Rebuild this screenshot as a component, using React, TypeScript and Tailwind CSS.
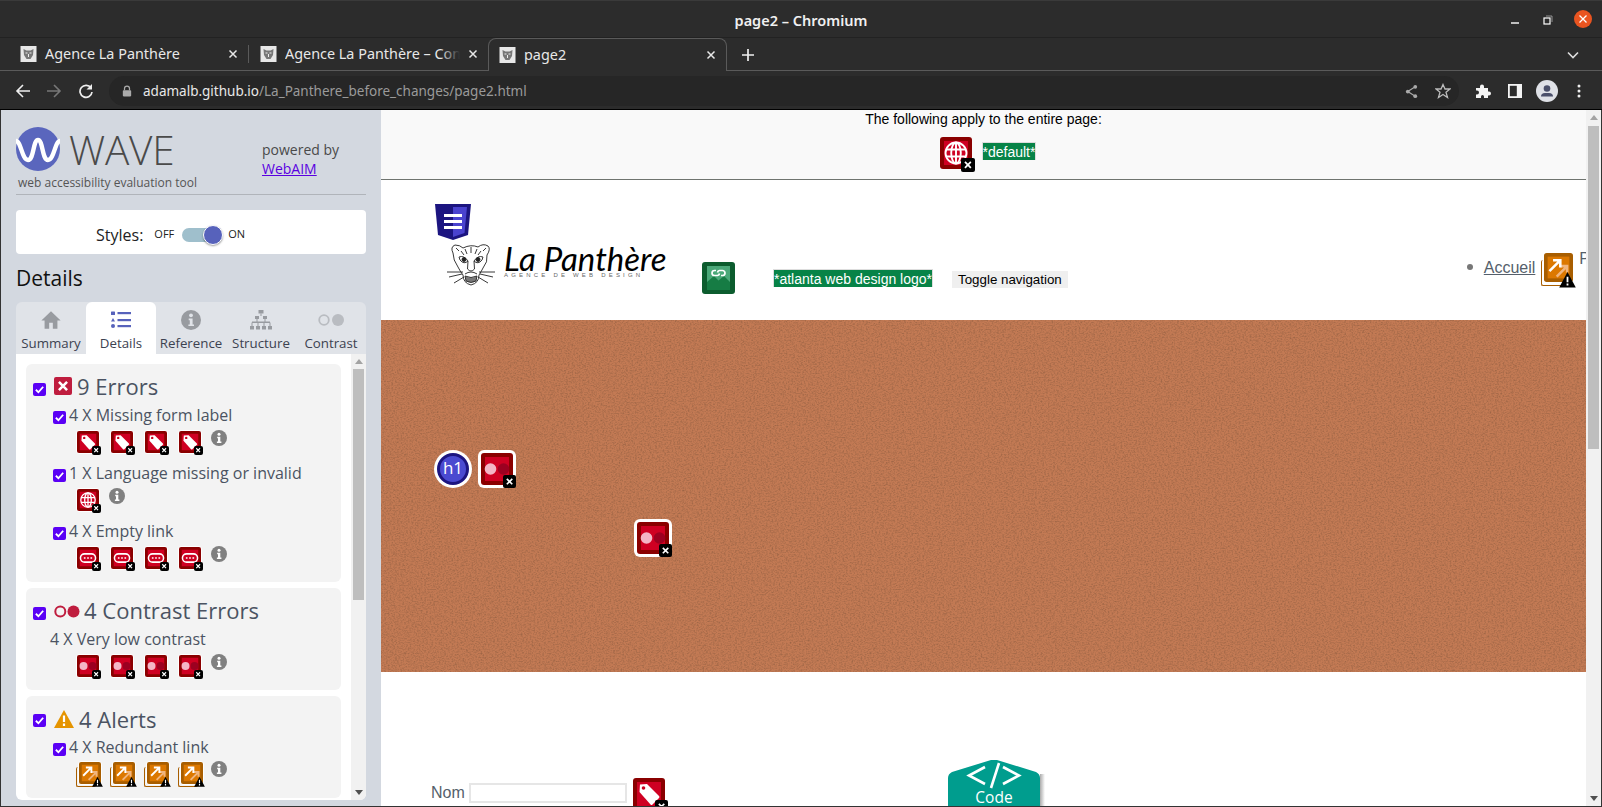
import React from "react";

type Kind = "tag" | "globe" | "link" | "contrast" | "redirect";

function Glyph({ kind }: { kind: Kind }) {
  if (kind === "tag")
    return (
      <g>
        <path d="M7 6.5 L14 6 L26 18 Q27 19 26 20 L19.5 26.5 Q18.5 27.5 17.5 26.5 L6.5 14 Z" fill="#fff" />
        <circle cx="10.5" cy="10" r="1.8" fill="#c8001e" />
      </g>
    );
  if (kind === "globe")
    return (
      <g fill="none" stroke="#fff" strokeWidth="1.9">
        <circle cx="16" cy="16" r="10.5" />
        <ellipse cx="16" cy="16" rx="4.8" ry="10.5" />
        <path d="M16 5.5V26.5M6 12.5H26M6 19.5H26" />
      </g>
    );
  if (kind === "link")
    return (
      <g fill="none" stroke="#fff" strokeWidth="2.2">
        <rect x="5" y="10" width="22" height="12" rx="6" />
        <path d="M10 16h2.4M14.8 16h2.4M19.6 16h2.4" strokeWidth="2.4" />
      </g>
    );
  if (kind === "contrast")
    return (
      <g>
        <circle cx="9.5" cy="16" r="5.8" fill="#f4b6c6" />
        <circle cx="22.5" cy="16" r="5.8" fill="#9c0020" />
      </g>
    );
  return (
    <g fill="none" strokeWidth="2.8">
      <path d="M14 26 L25 15 M18.5 14.5H25.5V21.5" stroke="#f0b57e" />
      <path d="M6 20 L17 9 M10 8H18V16" stroke="#fff" />
    </g>
  );
}

function XBadge({ s, off }: { s: number; off: number }) {
  return (
    <span className="absolute rounded-[2px] bg-black flex items-center justify-center" style={{ width: s, height: s, right: off, bottom: off }}>
      <svg viewBox="0 0 10 10" width={s * 0.7} height={s * 0.7}>
        <path d="M2 2L8 8M8 2L2 8" stroke="#fff" strokeWidth="1.8" />
      </svg>
    </span>
  );
}

function WarnBadge({ s, off, offB }: { s: number; off: number; offB: number }) {
  return (
    <span className="absolute" style={{ width: s, height: s, right: off, bottom: offB }}>
      <svg viewBox="0 0 16 15" width={s} height={s} className="block">
        <path d="M8 0.5 L15.8 15 H0.2 Z" fill="#000" />
        <path d="M8 5V10M8 11.2V13.2" stroke="#fff" strokeWidth="1.7" />
      </svg>
    </span>
  );
}

function Tile({ kind, size = 22, ring = 1, badge, off = -1, offB }: { kind: Kind; size?: number; ring?: number; badge?: number; off?: number; offB?: number }) {
  const orange = kind === "redirect";
  const edge = orange ? "#a85e00" : "#8a0000";
  const fill = orange ? "#dc7800" : "#cf0022";
  return (
    <span className="relative block shrink-0" style={{ width: size + ring * 2, height: size + ring * 2 }}>
      {orange && <span className="absolute rounded-[2px] border-l-[1.5px] border-b-[1.5px] border-[#a85e00]" style={{ left: -size * 0.13 + ring, bottom: -size * 0.13 + ring, width: size * 0.9, height: size * 0.9 }} />}
      {ring > 0 && <span className={"absolute inset-0 bg-white " + (ring > 1 ? "rounded-[6px]" : "rounded-[4px]")} />}
      <svg viewBox="0 0 32 32" width={size} height={size} className="absolute" style={{ left: ring, top: ring }}>
        <rect width="32" height="32" rx="3" fill={edge} />
        <rect x="4" y="4" width="24" height="24" fill={fill} />
        <Glyph kind={kind} />
      </svg>
      {orange ? <WarnBadge s={badge ?? 11} off={off} offB={offB ?? -2} /> : <XBadge s={badge ?? 9} off={off} />}
    </span>
  );
}

function Info({ className = "" }: { className?: string }) {
  return (
    <svg viewBox="0 0 16 16" width="16" height="16" className={className}>
      <circle cx="8" cy="8" r="8" fill="#808080" />
      <circle cx="8" cy="4.2" r="1.5" fill="#fff" />
      <path d="M6.2 6.8H9.3V11.6H10.4V13H5.9V11.6H7V8.2H6.2Z" fill="#fff" />
    </svg>
  );
}

function Check({ className = "" }: { className?: string }) {
  return (
    <span className={"w-[13px] h-[13px] rounded-[2px] bg-[#5a00f5] flex items-center justify-center shrink-0 " + className}>
      <svg viewBox="0 0 12 12" width="11" height="11">
        <path d="M2 6.3L4.8 9L10 3" fill="none" stroke="#fff" strokeWidth="2" />
      </svg>
    </span>
  );
}

function IconRow({ kind, n, className = "" }: { kind: Kind; n: number; className?: string }) {
  const inset = kind === "redirect" ? "ml-[52px]" : "ml-[50px]";
  return (
    <div className={"flex items-start h-[24px] " + inset + " " + className}>
      {Array.from({ length: n }).map((_, i) => (
        <span key={i} className="mr-[10px]">
          <Tile kind={kind} />
        </span>
      ))}
      <Info className={kind === "redirect" ? "-ml-[3px]" : "-ml-px"} />
    </div>
  );
}

function Sub({ text, className = "" }: { text: string; className?: string }) {
  return (
    <div className={"flex items-center pl-[27px] h-[20px] text-[16px] text-[#4b5362] " + className}>
      <Check className="mt-[4px]" />
      <span className="ml-[3px] leading-[20px]">{text}</span>
    </div>
  );
}

function Tab({ label, active, children }: { label: string; active?: boolean; children: React.ReactNode }) {
  return (
    <div className={"w-[70px] flex flex-col items-center rounded-t-[6px] " + (active ? "bg-white" : "")}>
      <div className="h-[33px] flex items-center justify-center pt-[2px]">{children}</div>
      <div className="text-[13.3px] leading-[16px] text-[#3c4250]">{label}</div>
    </div>
  );
}

function Sidebar() {
  return (
    <aside className="w-[381px] shrink-0 bg-[#d3d8e0] pl-[16px] pr-[15px] h-full overflow-hidden font-['Open_Sans',sans-serif] border-l border-[#333]">
      <div className="flex h-[85px] border-b border-[#b0b4ba] -ml-px">
        <div className="w-[246px] relative">
          <div className="flex items-center pt-[16px]">
            <svg viewBox="0 0 44 44" width="44" height="44" className="shrink-0">
              <circle cx="22" cy="22" r="22" fill="#5a66bd" />
              <path d="M0 14 C5 14 6 33 12 33 C18 33 17 13 22 13 C27 13 26 33 32 33 C38 33 39 14 44 14" fill="none" stroke="#fff" strokeWidth="4.4" />
            </svg>
            <span className="ml-[9px] mt-[2px] text-[40.5px] leading-[44px] font-light text-[#4a4a4a] tracking-[-0.2px]">WAVE</span>
          </div>
          <div className="ml-[2px] mt-[3px] text-[12px] leading-[16px] text-[#555]">web accessibility evaluation tool</div>
        </div>
        <div className="pt-[30px] text-[14px] leading-[19px] text-[#4a4a4a]">
          powered by
          <br />
          <a className="underline text-[#5a00e0]">WebAIM</a>
        </div>
      </div>
      <div className="mt-[15px] -ml-px h-[44px] w-[350px] bg-white rounded-[4px] flex items-center pl-[80px] pt-[5px]">
        <span className="text-[16px] text-[#222]">Styles:</span>
        <span className="ml-[11px] text-[11px] text-[#222]">OFF</span>
        <span className="relative ml-[8px] w-[32px] h-[14px] rounded-full bg-[#9fbfcc]">
          <span className="absolute -right-[9px] -top-[3px] w-[20px] h-[20px] rounded-full bg-[#5762bb] border border-white shadow-[0_1px_2px_rgba(0,0,0,0.4)]" />
        </span>
        <span className="ml-[14px] text-[11px] text-[#222]">ON</span>
      </div>
      <h2 className="-ml-px mt-[10px] h-[38px] text-[21px] leading-[28px] text-[#111] font-normal">Details</h2>
      <div className="-ml-px w-[350px] h-[52px] bg-[#e0e3e8] rounded-t-[6px] flex">
        <Tab label="Summary">
          <svg viewBox="0 0 24 24" width="22" height="22">
            <path d="M12 2.5L1.5 12.5H5V21.5H10V15H14V21.5H19V12.5H22.5Z" fill="#989ba0" />
          </svg>
        </Tab>
        <Tab label="Details" active>
          <svg viewBox="0 0 20 18" width="20" height="18">
            <g fill="#5762bb">
              <rect x="0" y="0.5" width="4" height="3.6" rx="0.6" />
              <path d="M2 7 L4 10.5 H0 Z" />
              <circle cx="2" cy="15" r="2" />
              <rect x="6.5" y="1" width="13.5" height="2.2" />
              <rect x="6.5" y="8" width="13.5" height="2.2" />
              <rect x="6.5" y="14" width="13.5" height="2.2" />
            </g>
          </svg>
        </Tab>
        <Tab label="Reference">
          <svg viewBox="0 0 20 20" width="20" height="20">
            <circle cx="10" cy="10" r="10" fill="#989ba0" />
            <circle cx="10" cy="5.3" r="1.9" fill="#e0e3e8" />
            <path d="M7.7 8.6H11.6V14.4H13V16H7.4V14.4H8.8V10.2H7.7Z" fill="#e0e3e8" />
          </svg>
        </Tab>
        <Tab label="Structure">
          <svg viewBox="0 0 22 20" width="22" height="20" fill="#989ba0">
            <rect x="8.5" y="0" width="5" height="3.5" />
            <rect x="5" y="6" width="4" height="3" />
            <rect x="13" y="6" width="4" height="3" />
            <rect x="0" y="16" width="4" height="3.5" />
            <rect x="6" y="16" width="4" height="3.5" />
            <rect x="12" y="16" width="4" height="3.5" />
            <rect x="18" y="16" width="4" height="3.5" />
            <path d="M11 3.5V6M7 9V12M15 9V12M2 16V12.5H20V16M8 16V12.5M14 16V12.5M2 12H20" fill="none" stroke="#989ba0" strokeWidth="1" />
          </svg>
        </Tab>
        <Tab label="Contrast">
          <svg viewBox="0 0 26 12" width="26" height="12">
            <circle cx="6" cy="6" r="4.8" fill="none" stroke="#b9bcc1" strokeWidth="1.8" />
            <circle cx="20" cy="6" r="6" fill="#b9bcc1" />
          </svg>
        </Tab>
      </div>
      <div className="-ml-px relative w-[350px] h-[446px] bg-white rounded-b-[6px] pl-[10px] pt-[10px] overflow-hidden">
        <div className="w-[315px] h-[218px] bg-[#f3f3f3] rounded-[6px] pt-[11px]">
          <div className="flex items-start pl-[7px] h-[28px]">
            <Check className="mt-[8px]" />
            <span className="ml-[8px] mt-[2px] w-[18px] h-[18px] rounded-[2px] bg-[#bf1d3e] flex items-center justify-center">
              <svg viewBox="0 0 12 12" width="14" height="14">
                <path d="M2.5 2.5L9.5 9.5M9.5 2.5L2.5 9.5" stroke="#fff" strokeWidth="2.2" />
              </svg>
            </span>
            <span className="ml-[5px] -mt-[3px] text-[22px] leading-[28px] text-[#4b5362]">9 Errors</span>
          </div>
          <Sub text="4 X Missing form label" className="mt-[2px]" />
          <IconRow kind="tag" n={4} className="mt-[5px]" />
          <Sub text="1 X Language missing or invalid" className="mt-[9px]" />
          <IconRow kind="globe" n={1} className="mt-[5px]" />
          <Sub text="4 X Empty link" className="mt-[9px]" />
          <IconRow kind="link" n={4} className="mt-[5px]" />
        </div>
        <div className="w-[315px] h-[102px] bg-[#f3f3f3] rounded-[6px] mt-[6px] pt-[10px]">
          <div className="flex items-start pl-[7px] h-[28px]">
            <Check className="mt-[9px]" />
            <svg viewBox="0 0 26 13" width="26" height="13" className="ml-[8px] mt-[7px]">
              <circle cx="6.3" cy="6.5" r="5" fill="none" stroke="#bf1d3e" strokeWidth="2" />
              <circle cx="19.5" cy="6.5" r="6" fill="#bf1d3e" />
            </svg>
            <span className="ml-[4px] -mt-px text-[22px] leading-[26px] text-[#4b5362]">4 Contrast Errors</span>
          </div>
          <div className="pl-[24px] h-[20px] mt-[3px] text-[16px] leading-[20px] text-[#4b5362]">4 X Very low contrast</div>
          <IconRow kind="contrast" n={4} className="mt-[5px]" />
        </div>
        <div className="w-[315px] h-[102px] bg-[#f3f3f3] rounded-[6px] mt-[6px] pt-[10px]">
          <div className="flex items-start pl-[7px] h-[28px]">
            <Check className="mt-[8px]" />
            <svg viewBox="0 0 20 18" width="20" height="18" className="ml-[8px] mt-[4px]">
              <path d="M10 0 L20 18 H0 Z" fill="#e59400" />
              <path d="M10 5.5V12M10 13.5V16" stroke="#fff" strokeWidth="2.2" />
            </svg>
            <span className="ml-[5px] text-[22px] leading-[26px] text-[#4b5362]">4 Alerts</span>
          </div>
          <Sub text="4 X Redundant link" className="mt-[3px]" />
          <IconRow kind="redirect" n={4} className="mt-[4px]" />
        </div>
        <div className="absolute right-0 top-0 bottom-0 w-[15px] bg-[#f1f1f1] flex flex-col items-center">
          <svg viewBox="0 0 10 6" width="8" height="5" className="mt-[5px]"><path d="M5 0L10 6H0Z" fill="#a3a3a3" /></svg>
          <div className="w-[11px] h-[231px] bg-[#bebebe] mt-[5px]" />
          <svg viewBox="0 0 10 6" width="8" height="5" className="mt-auto mb-[5px]"><path d="M5 6L10 0H0Z" fill="#505050" /></svg>
        </div>
      </div>
    </aside>
  );
}

function Panther() {
  return (
    <svg viewBox="0 0 50 42" width="50" height="42" className="shrink-0" fill="none" stroke="#222" strokeWidth="0.9">
      <path d="M7 9 Q4 3 9 1 Q14 1 17 4 Q25 0 32 3 Q37 -1 42 2 Q45 5 41 11 Q42 18 37 24 Q35 28 33 31 Q33 39 25 41 Q17 39 17 31 Q14 27 12 23 Q7 16 7 9Z" />
      <path d="M10 4l3 3M40 4l-3 3M19 5l2 5M31 5l-2 5M25 3v6M15 7l3 4M35 7l-3 4" />
      <path d="M13 13 Q18 11 22 17 Q18 21 14 16ZM37 13 Q32 11 28 17 Q32 21 36 16Z" />
      <circle cx="18" cy="15.5" r="2" fill="#222" /><circle cx="32" cy="15.5" r="2" fill="#222" />
      <path d="M22 17 L21.5 25 Q25 29 28.5 25 L28 17M19 30 Q25 26 31 30" />
      <path d="M19 32 Q25 35 31 32 L30 37 Q25 40 20 37Z" fill="#777" />
      <path d="M17 28 L1 28 M16 30 L3 33 M18 33 L8 39 M33 28 L49 28 M34 30 L47 33 M32 33 L42 39" />
    </svg>
  );
}

function Main() {
  return (
    <main className="flex-1 min-w-0 h-full overflow-hidden relative font-['Liberation_Sans',sans-serif] bg-white">
      <div className="h-[70px] bg-[#f9f9f9] border-b border-[#6f746f] flex flex-col items-center">
        <div className="text-[14px] leading-[18px] text-black">The following apply to the entire page:</div>
        <div className="flex items-center mt-[9px] ml-[9px]">
          <Tile kind="globe" size={32} ring={0} badge={14} off={-3} />
          <span className="ml-[10px] -mt-[4px] h-[18px] leading-[18px] text-[14px] text-white bg-[#078347] border-x border-t border-[#ddd]">*default*</span>
        </div>
      </div>
      <div className="h-[140px] pt-[24px] pl-[54px] whitespace-nowrap">
        <svg viewBox="0 0 36 36" width="36" height="36" className="block">
          <path d="M0 0H36L33 31L18 36L3 31Z" fill="#1c1580" />
          <path d="M18 3H32L29.5 29L18 33Z" fill="#4a43cf" />
          <rect x="9" y="10" width="18" height="3" fill="#fff" />
          <rect x="9" y="16" width="18" height="3" fill="#fff" />
          <rect x="9" y="22" width="18" height="3" fill="#fff" />
        </svg>
        <div className="flex items-start ml-[11px] mt-[4px]">
          <Panther />
          <div className="ml-[8px] w-[162px] shrink-0 h-[40px]">
            <span className="block font-['Lato',sans-serif] italic text-[33px] leading-[28px] text-black">La Panthère</span>
            <span className="block text-[6px] leading-[6px] tracking-[3.2px] text-[#666]">AGENCE DE WEB DESIGN</span>
          </div>
          <span className="ml-[36px] mt-[18px] shrink-0">
            <svg viewBox="0 0 33 32" width="33" height="32" className="block">
              <rect width="33" height="32" rx="3" fill="#0c5c2e" />
              <rect x="5" y="4" width="23" height="24" fill="#4aa878" />
              <path d="M5 28V20L12 14L16.5 18.5L22 14L28 20V28Z" fill="#167c44" />
              <path d="M14 8.5H12.5a2.4 2.4 0 0 0 0 5H15.5a2.4 2.4 0 0 0 2-2M19 13.5H20.5a2.4 2.4 0 0 0 0-5H17.5a2.4 2.4 0 0 0-2 2" fill="none" stroke="#fff" strokeWidth="1.7" />
            </svg>
          </span>
          <span className="ml-[38px] mt-[25px] h-[18px] shrink-0 leading-[18px] text-[14px] text-white bg-[#078347] border-x border-t border-[#ddd]">*atlanta web design logo*</span>
          <span className="ml-[19px] mt-[27px] h-[17px] shrink-0 leading-[17px] text-[13.33px] text-black bg-[#efefef] px-[6px]">Toggle navigation</span>
          <span className="ml-[399px] mt-[20px] w-[6px] h-[6px] shrink-0 rounded-full bg-[#777]" />
          <a className="ml-[11px] mt-[15px] shrink-0 text-[16px] leading-[18px] underline text-[#555f6b]">Accueil</a>
          <span className="ml-[9px] mt-[9px] shrink-0"><Tile kind="redirect" size={29} ring={0} badge={17} off={-3} offB={-6} /></span>
          <span className="ml-[6px] mt-[6px] shrink-0 text-[16px] leading-[18px] text-[#555f6b]">P</span>
        </div>
      </div>
      <div className="relative h-[352px] bg-[#c37a54] overflow-hidden">
        <svg className="absolute inset-0 w-full h-full" xmlns="http://www.w3.org/2000/svg">
          <filter id="paper" x="0" y="0" width="100%" height="100%">
            <feTurbulence type="fractalNoise" baseFrequency="0.55 0.75" numOctaves="3" seed="4" />
            <feColorMatrix values="0 0 0 0 0.34  0 0 0 0 0.13  0 0 0 0 0.06  2 0 0 0 -0.8" />
          </filter>
          <rect width="100%" height="100%" filter="url(#paper)" />
        </svg>
        <div className="relative pt-[130px] pl-[53px] flex">
          <span className="w-[38px] h-[38px] rounded-full bg-white flex items-center justify-center">
            <span className="w-[32px] h-[32px] rounded-full bg-[#4a4ad0] border-[3px] border-[#1c1580] text-white text-[17px] leading-[24px] text-center font-['Open_Sans',sans-serif]">h1</span>
          </span>
          <span className="ml-[6px]"><Tile kind="contrast" size={32} ring={3} badge={13} off={0} /></span>
        </div>
        <div className="relative mt-[31px] ml-[253px] w-[38px]">
          <Tile kind="contrast" size={32} ring={3} badge={13} off={0} />
        </div>
      </div>
      <div className="flex items-start pl-[50px] pt-[106px] whitespace-nowrap">
        <span className="text-[16px] leading-[20px] mt-[5px] text-[#555f6b]">Nom</span>
        <span className="ml-[4px] mt-[5px] w-[158px] h-[20px] border-2 border-[#e6e6e6] bg-white" />
        <span className="ml-[6px]"><Tile kind="tag" size={32} ring={0} badge={13} off={-3} /></span>
      </div>
      <div className="absolute left-[567px] top-[650px] w-[92px] h-[46px] overflow-hidden">
        <div className="relative w-[92px] h-[60px] flex flex-col items-center text-white">
          <svg viewBox="0 0 92 60" width="92" height="60" className="absolute inset-0">
            <path d="M0 18 Q0 14 4 12 L43 0 Q46 -1 49 0 L88 12 Q92 14 92 18 V60 H0Z" fill="#009d8e" />
            <path d="M37 7 L21 15.5 L37 24M55 7 L71 15.5 L55 24M51 3 L43 28" fill="none" stroke="#fff" strokeWidth="2.6" />
          </svg>
          <span className="relative mt-[27px] text-[15.5px] leading-[20px] font-['Open_Sans',sans-serif]">Code</span>
        </div>
      </div>
      <div className="absolute left-[659px] top-[664px] w-[5px] h-[32px] bg-gradient-to-r from-[#00000055] to-transparent" />
    </main>
  );
}

function PageBar() {
  return (
    <div className="w-[16px] shrink-0 bg-[#f1f1f1] border-r border-[#333] h-full flex flex-col items-center">
      <svg viewBox="0 0 10 6" width="8" height="5" className="mt-[5px]"><path d="M5 0L10 6H0Z" fill="#a3a3a3" /></svg>
      <div className="w-[11px] h-[323px] bg-[#bebebe] mt-[6px]" />
      <svg viewBox="0 0 10 6" width="8" height="5" className="mt-auto mb-[5px]"><path d="M5 6L10 0H0Z" fill="#505050" /></svg>
    </div>
  );
}

function Favicon() {
  return (
    <svg viewBox="0 0 16 16" width="17" height="16" className="shrink-0">
      <rect width="16" height="16" fill="#e8e8e8" />
      <path d="M3 3 L6 4.5 H10 L13 3 L12.5 9 L10 13 H6 L3.5 9Z" fill="#777" />
      <path d="M5 7h2M9 7h2M8 8v3" stroke="#eee" strokeWidth="1" />
    </svg>
  );
}

function X() {
  return (
    <svg viewBox="0 0 10 10" width="10" height="10" className="shrink-0">
      <path d="M1.5 1.5L8.5 8.5M8.5 1.5L1.5 8.5" stroke="#e8e8e8" strokeWidth="1.5" />
    </svg>
  );
}

function Chrome() {
  const ui = "font-['Noto_Sans',sans-serif]";
  return (
    <div className={"bg-[#2c2c2c] text-[#e8e8e8] " + ui}>
      <div className="h-[38px] border-b border-[#222] flex items-center justify-center relative border-t border-t-[#3a3a3a] pt-[3px]">
        <span className="text-[14.5px] font-semibold text-[#f0f0f0]">page2 – Chromium</span>
        <svg viewBox="0 0 12 12" width="12" height="12" className="absolute left-[1509px] top-[13px]"><path d="M2 9H10" stroke="#fff" strokeWidth="1.4" /></svg>
        <svg viewBox="0 0 10 10" width="10" height="10" className="absolute left-[1543px] top-[14px]">
          <rect x="1" y="3" width="6" height="6" fill="none" stroke="#fff" strokeWidth="1.2" />
          <path d="M3 1H9V7" fill="none" stroke="#aaa" strokeWidth="0.8" />
        </svg>
        <span className="absolute left-[1574px] top-[9px] w-[18px] h-[18px] rounded-full bg-[#e95420] flex items-center justify-center">
          <svg viewBox="0 0 10 10" width="10" height="10"><path d="M1.5 1.5L8.5 8.5M8.5 1.5L1.5 8.5" stroke="#fff" strokeWidth="1.3" /></svg>
        </span>
      </div>
      <div className="h-[33px] border-b border-[#5a5a5a] flex items-center text-[14.4px] relative whitespace-nowrap">
        <div className="w-[248px] pl-[20px] pr-[10px] flex items-center">
          <Favicon />
          <span className="ml-[8px] flex-1">Agence La Panthère</span>
          <X />
        </div>
        <span className="w-px h-[18px] bg-[#5a5a5a]" />
        <div className="w-[239px] pl-[11px] pr-[10px] flex items-center">
          <Favicon />
          <span className="ml-[8px] w-[175px] overflow-hidden relative">
            Agence La Panthère – Contact
            <span className="absolute right-0 top-0 bottom-0 w-[20px] bg-gradient-to-r from-transparent to-[#2c2c2c]" />
          </span>
          <span className="ml-[8px]"><X /></span>
        </div>
        <div className="absolute left-[488px] top-0 -bottom-px w-[239px] bg-[#2c2c2c] border border-b-0 border-[#5a5a5a] rounded-t-[8px] pl-[10px] pr-[10px] flex items-center">
          <Favicon />
          <span className="ml-[8px] flex-1">page2</span>
          <X />
        </div>
        <svg viewBox="0 0 14 14" width="14" height="14" className="absolute left-[741px] top-[10px]"><path d="M7 1V13M1 7H13" stroke="#eee" strokeWidth="1.7" /></svg>
        <svg viewBox="0 0 12 8" width="12" height="8" className="absolute left-[1567px] top-[13px]"><path d="M1 1.5L6 6.5L11 1.5" fill="none" stroke="#ddd" strokeWidth="1.6" /></svg>
      </div>
      <div className="h-[39px] border-b border-black flex items-center relative pl-[15px] pt-[2px]">
        <svg viewBox="0 0 16 16" width="16" height="16"><path d="M15 8H2M8 2L2 8L8 14" fill="none" stroke="#eee" strokeWidth="1.6" /></svg>
        <svg viewBox="0 0 16 16" width="16" height="16" className="ml-[15px]"><path d="M1 8H14M8 2L14 8L8 14" fill="none" stroke="#777" strokeWidth="1.6" /></svg>
        <svg viewBox="0 0 16 16" width="16" height="16" className="ml-[16px]"><path d="M13 5A6 6 0 1 0 14 9" fill="none" stroke="#eee" strokeWidth="1.7" /><path d="M14 1V6.5H8.5Z" fill="#eee" /></svg>
        <div className="ml-[15px] w-[1350px] h-[30px] rounded-full bg-[#262626] flex items-center pl-[13px] text-[13.5px]">
          <svg viewBox="0 0 12 14" width="10" height="12"><rect x="1" y="6" width="10" height="7.5" rx="1" fill="#aaa" /><path d="M3 6V4a3 3 0 0 1 6 0v2" fill="none" stroke="#aaa" strokeWidth="1.5" /></svg>
          <span className="ml-[11px] text-[#e8e8e8]">adamalb.github.io</span>
          <span className="text-[#9a9a9a]">/La_Panthere_before_changes/page2.html</span>
          <svg viewBox="0 0 16 16" width="15" height="15" className="absolute left-[1404px]">
            <path d="M12 3L4 8L12 13" fill="none" stroke="#aaa" strokeWidth="1.3" />
            <circle cx="12" cy="3" r="2" fill="#aaa" /><circle cx="4" cy="8" r="2" fill="#aaa" /><circle cx="12" cy="13" r="2" fill="#aaa" />
          </svg>
          <svg viewBox="0 0 16 16" width="16" height="16" className="absolute left-[1435px]">
            <path d="M8 1.5L10 6H15L11 9.2L12.5 14.5L8 11.5L3.5 14.5L5 9.2L1 6H6Z" fill="none" stroke="#bbb" strokeWidth="1.3" />
          </svg>
        </div>
        <svg viewBox="0 0 16 16" width="16" height="16" className="absolute left-[1475px]">
          <path d="M1 5H5V3.5a2 2 0 0 1 4 0V5H13V8.5h1a2 2 0 0 1 0 4H13V15H9V13.5a1.5 1.5 0 0 0-3 0V15H1V11.5H2a2 2 0 0 0 0-4H1Z" fill="#f4f4f4" />
        </svg>
        <svg viewBox="0 0 14 14" width="14" height="14" className="absolute left-[1508px]">
          <rect width="14" height="14" fill="#f4f4f4" />
          <rect x="1.8" y="1.8" width="7" height="10.4" fill="#2c2c2c" />
        </svg>
        <svg viewBox="0 0 22 22" width="22" height="22" className="absolute left-[1536px]">
          <circle cx="11" cy="11" r="11" fill="#dfe1e7" />
          <circle cx="11" cy="8.5" r="3.3" fill="#4a4f6a" />
          <path d="M5 16.5Q5 13 9 13H13Q17 13 17 16.5Z" fill="#4a4f6a" />
        </svg>
        <svg viewBox="0 0 4 14" width="4" height="14" className="absolute left-[1577px]">
          <circle cx="2" cy="2" r="1.5" fill="#eee" /><circle cx="2" cy="7" r="1.5" fill="#eee" /><circle cx="2" cy="12" r="1.5" fill="#eee" />
        </svg>
      </div>
    </div>
  );
}

export default function App() {
  return (
    <div className="w-[1602px] h-[807px] overflow-hidden flex flex-col">
      <Chrome />
      <div className="flex h-[697px] border-b border-[#333]">
        <Sidebar />
        <Main />
        <PageBar />
      </div>
    </div>
  );
}
